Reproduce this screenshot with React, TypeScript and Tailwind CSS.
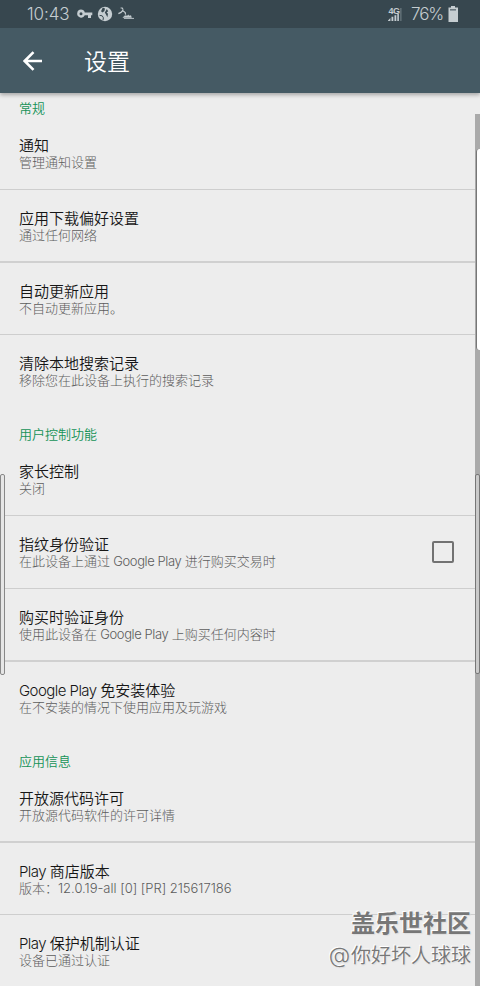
import React from "react";

type Item = { title: string; desc: string; row: string; checkbox?: boolean; wide?: boolean };
type Section = { name: string; items: Item[] };

const thin = "border-b border-[#cecece]";
const thick = "border-b-2 border-[#d0d0d0]";

const sections: Section[] = [
  {
    name: "常规",
    items: [
      { title: "通知", desc: "管理通知设置", row: `h-[73px] ${thin}` },
      { title: "应用下载偏好设置", desc: "通过任何网络", row: `h-[73px] ${thick}` },
      { title: "自动更新应用", desc: "不自动更新应用。", row: `h-[72px] ${thin}` },
      { title: "清除本地搜索记录", desc: "移除您在此设备上执行的搜索记录", row: "h-[72px]" },
    ],
  },
  {
    name: "用户控制功能",
    items: [
      { title: "家长控制", desc: "关闭", row: `h-[73px] ${thin}` },
      { title: "指纹身份验证", desc: "在此设备上通过 Google Play 进行购买交易时", row: `h-[73px] ${thin}`, checkbox: true },
      { title: "购买时验证身份", desc: "使用此设备在 Google Play 上购买任何内容时", row: `h-[73px] ${thick}` },
      { title: "Google Play 免安装体验", desc: "在不安装的情况下使用应用及玩游戏", row: "h-[72px]" },
    ],
  },
  {
    name: "应用信息",
    items: [
      { title: "开放源代码许可", desc: "开放源代码软件的许可详情", row: `h-[73px] ${thick}` },
      { title: "Play 商店版本", desc: "版本：12.0.19-all [0] [PR] 215617186", row: `h-[72px] ${thin}`, wide: true },
      { title: "Play 保护机制认证", desc: "设备已通过认证", row: "h-[71px]" },
    ],
  },
];

function Mixed({ text, className }: { text: string; className: string }) {
  return (
    <>
      {text.split(/([\x20-\x7e]+)/).map((part, i) =>
        i % 2 ? (
          <span key={i} className={className}>{part}</span>
        ) : (
          part
        ),
      )}
    </>
  );
}

function StatusBar() {
  return (
    <div className="flex h-7 items-center bg-[#37474f] pl-[27px] pr-[22px] text-[#c5cdd1]">
      <span className="w-[45px] text-[17px] font-light leading-7 tracking-[-0.1px]">10:43</span>
      <svg className="ml-[5px]" width="16" height="10" viewBox="0 0 16 10" fill="currentColor">
        <path fillRule="evenodd" d="M4 .6a4 4 0 1 0 3.8 5.7H11V9h3V6.3h1.3V3.4H7.8A4 4 0 0 0 4 .6Zm0 2.7a1.5 1.5 0 1 1 0 3 1.5 1.5 0 0 1 0-3Z" />
      </svg>
      <svg className="ml-1" width="16" height="16" viewBox="0 0 16 16">
        <circle cx="8" cy="8" r="7.2" fill="currentColor" />
        <path d="M5.8 1.4 8 2.6 7.4 5 5.6 6.4 4 5.2Z" fill="#37474f" />
        <path d="m9.8 3 1.4 2.2-1.6 1.4 1.4 1.2-.6 3.4-1.4-2.8-1.2-2 1.2-2Z" fill="#37474f" />
        <path d="m2.6 9.4 2.6.4 1.2 2-.4 2.4" fill="none" stroke="#37474f" strokeWidth="1" />
      </svg>
      <svg className="ml-[5px]" width="17" height="14" viewBox="0 0 17 14" fill="none" stroke="currentColor">
        <path d="M2.6 1h1.6l1 1.8M5 3.2 3 5.4.4 6.6M4.8 3.6l2.4 2 .4 2" strokeWidth="1.2" />
        <path d="M5 10.8c1-2.2 2.5-2.5 4-1.8l1.4-.9 1.3 1 1.2-.5.5 2H5Z" fill="currentColor" strokeWidth=".5" />
        <path d="M6 11.4h10" strokeWidth=".9" />
      </svg>
      <svg className="ml-auto" width="14" height="16" viewBox="0 0 14 16">
        <text x="0.6" y="7.6" fontFamily="Liberation Sans, sans-serif" fontWeight="700" fontSize="9" letterSpacing="-0.5" fill="currentColor">4G</text>
        <path d="M0 15v-.6L2.4 12v3ZM3.5 15v-4.2h1.8V15ZM6.5 15V9.2h1.8V15ZM9.3 15V8h1.6v7Z" fill="currentColor" />
        <path d="M12.9 2v13" stroke="#77848b" />
      </svg>
      <span className="ml-[9px] w-[34px] text-[17px] font-light leading-7 tracking-[-1.1px]">76%</span>
      <svg className="ml-[3px]" width="10" height="16" viewBox="0 0 10 16">
        <path d="M3 0h4v1.5h3V16H.5V1.5H3Z" fill="currentColor" />
        <path d="M2 3.8h6" stroke="#6b7980" strokeWidth="1.6" />
      </svg>
    </div>
  );
}

export default function App() {
  return (
    <div className="relative flex h-[986px] w-[480px] flex-col overflow-hidden bg-[#ededed] font-['Inter','Noto_Sans_CJK_SC',sans-serif]">
      <header className="z-10 shadow-[0_2px_4px_rgba(0,0,0,0.3)]">
        <StatusBar />
        <div className="flex h-[65px] items-center bg-[#455a64] pl-[23px] text-white">
          <svg width="20" height="20" viewBox="0 0 20 20" fill="none" stroke="currentColor" strokeWidth="2.6">
            <path d="M19 10H2M10.5 1.2 1.7 10l8.8 8.8" />
          </svg>
          <h1 className="ml-[41px] pt-0.5 text-[23px] font-[350] leading-8">设置</h1>
        </div>
      </header>

      <main className="-mt-3">
        {sections.map((s) => (
          <section key={s.name}>
            <h2 className="h-9 pl-[19px] pt-[18px] text-[13px] font-[350] leading-[18px] text-[#149257]">{s.name}</h2>
            {s.items.map((it) => (
              <div key={it.title} className={`flex justify-between pl-[19px] pr-[26px] ${it.row}`}>
                <div className="pt-5">
                  <div className="whitespace-nowrap text-[15px] font-[350] leading-[18px] text-[#161616]">
                    <Mixed text={it.title} className="font-light tracking-[-0.55px]" />
                  </div>
                  <div className="-mt-px whitespace-nowrap text-[13px] font-light leading-4 text-[#5c5c5c]">
                    <Mixed text={it.desc} className={it.wide ? "tracking-[-0.02px]" : "tracking-[-0.4px]"} />
                  </div>
                </div>
                {it.checkbox && <div className="mt-[25px] h-[22px] w-[22px] rounded-[2px] border-2 border-[#727272]" />}
              </div>
            ))}
          </section>
        ))}
      </main>

      <div className="absolute bottom-0 right-0 top-[114px] w-[5px] bg-[#aaa]" />
      <div className="absolute right-0 top-[149px] h-[201px] w-1 rounded-l-[3px] border-l border-[#777] bg-white" />
      <div className="absolute right-0 top-[474px] h-[200px] w-[5px] rounded-[2px] border border-[#777] bg-[#cacaca]" />
      <div className="absolute left-0 top-[474px] h-[201px] w-[5px] rounded-[2px] border border-[#888] bg-[#e6e6e6]" />

      <div className="absolute bottom-[15px] right-[9px] text-right text-[#777] [text-shadow:-1px_-1px_0_#fff,1px_1px_1px_#ddd]">
        <div className="text-[24px] font-bold leading-8">盖乐世社区</div>
        <div className="text-[20px] font-[350] leading-[30px]"><span className="text-[22px] tracking-[1px]">@</span>你好坏人球球</div>
      </div>
    </div>
  );
}
